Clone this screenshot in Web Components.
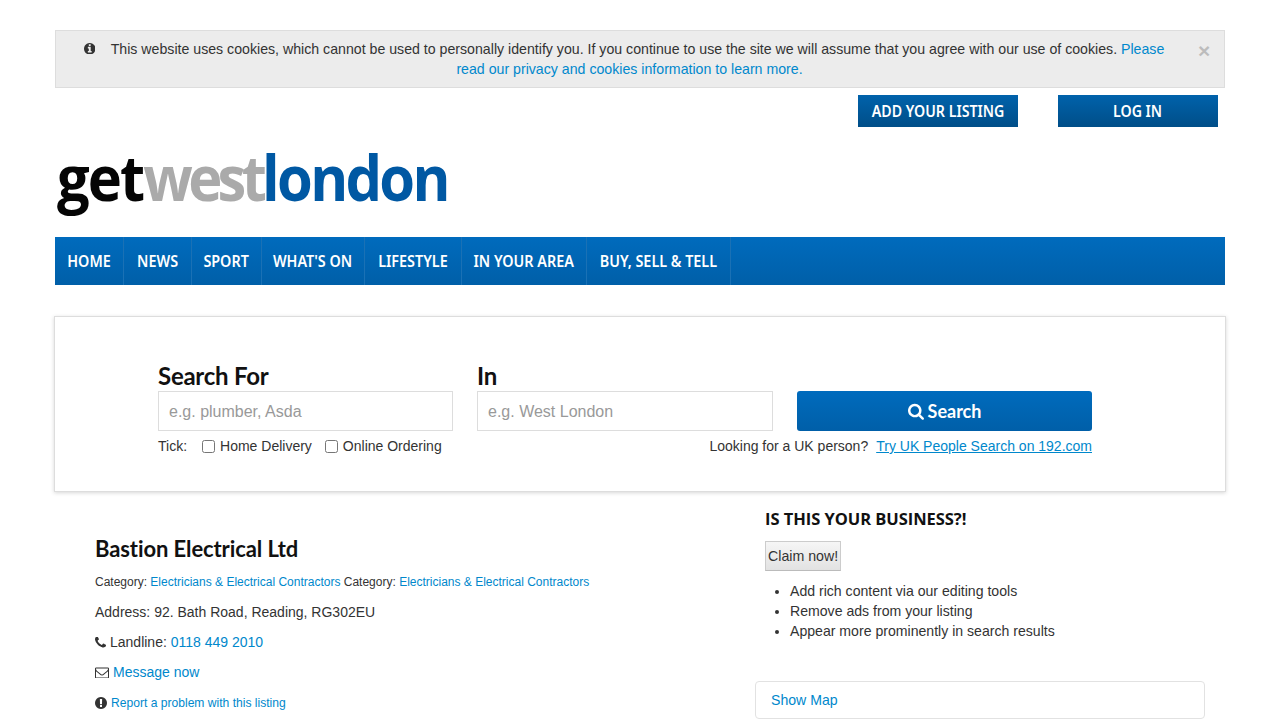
<!DOCTYPE html>
<html lang="en"><head><meta charset="utf-8"><title>Bastion Electrical Ltd</title>
<style>
html,body{margin:0;padding:0;background:#fff;overflow:hidden;height:720px}
body{font:14px/20px "Liberation Sans",Arial,sans-serif;color:#333}
</style></head><body>
<gwl-page></gwl-page>
<script>
const ICONS={
info:['128 128 1536 1536','M1152 1376v-160q0-14-9-23t-23-9h-96v-512q0-14-9-23t-23-9h-320q-14 0-23 9t-9 23v160q0 14 9 23t23 9h96v320h-96q-14 0-23 9t-9 23v160q0 14 9 23t23 9h448q14 0 23-9t9-23zm-128-896v-160q0-14-9-23t-23-9h-192q-14 0-23 9t-9 23v160q0 14 9 23t23 9h192q14 0 23-9t9-23zm640 416q0 209-103 385.5t-279.5 279.5-385.5 103-385.5-103-279.5-279.5-103-385.5 103-385.5 279.5-279.5 385.5-103 385.5 103 279.5 279.5 103 385.5z'],
warn:['128 128 1536 1536','M896 128q209 0 385.5 103t279.5 279.5 103 385.5-103 385.5-279.5 279.5-385.5 103-385.5-103-279.5-279.5-103-385.5 103-385.5 279.5-279.5 385.5-103zm128 1247v-190q0-14-9-23.5t-22-9.5h-192q-13 0-23 10t-10 23v190q0 13 10 23t23 10h192q13 0 22-9.5t9-23.5zm-2-344l18-621q0-12-10-18-10-8-24-8h-220q-14 0-24 8-10 6-10 18l17 621q0 10 10 17.5t24 7.5h185q14 0 23.5-7.5t10.5-17.5z'],
phone:['192 192 1408 1408','M1600 1240q0 27-10 70.5t-21 68.5q-21 50-122 106-94 51-186 51-27 0-53-3.5t-57.5-12.5-47-14.5-55.5-20.5-49-18q-98-35-175-83-127-79-264-216t-216-264q-48-77-83-175-3-9-18-49t-20.5-55.5-14.5-47-12.5-57.5-3.5-53q0-92 51-186 56-101 106-122 25-11 68.5-21t70.5-10q14 0 21 3 18 6 53 76 11 19 30 54t35 63.5 31 53.5q3 4 17.5 25t21.5 35.5 7 28.5q0 20-28.5 50t-62 55-62 53-28.5 46q0 9 5 22.5t8.5 20.5 14 24 11.5 19q76 137 174 235t235 174q2 1 19 11.5t24 14 20.5 8.5 22.5 5q18 0 46-28.5t53-62 55-62 50-28.5q14 0 28.5 7t35.5 21.5 25 17.5q25 15 53.5 31t63.5 35 54 30q70 35 76 53 3 7 3 21z'],
mail:['0 256 1792 1280','M1664 1504v-768q-32 36-69 66-268 206-426 338-51 43-83 67t-86.5 48.5-102.5 24.5h-2q-48 0-102.5-24.5t-86.5-48.5-83-67q-158-132-426-338-37-30-69-66v768q0 13 9.5 22.5t22.5 9.5h1472q13 0 22.5-9.5t9.5-22.5zm0-1051v-24.5l-.5-13-3-12.5-5.5-9-9-7.5-14-2.5h-1472q-13 0-22.5 9.5t-9.5 22.5q0 168 147 284 193 152 401 317 6 5 35 29.5t46 37.5 44.5 31.5 50.5 27.5 43 9h2q20 0 43-9t50.5-27.5 44.5-31.5 46-37.5 35-29.5q208-165 401-317 54-43 100.5-115.5t46.5-131.5zm128-37v1088q0 66-47 113t-113 47h-1472q-66 0-113-47t-47-113v-1088q0-66 47-113t113-47h1472q66 0 113 47t47 113z'],
search:['64 64 1664 1728','M1216 832q0-185-131.5-316.5t-316.5-131.5-316.5 131.5-131.5 316.5 131.5 316.5 316.5 131.5 316.5-131.5 131.5-316.5zm512 832q0 52-38 90t-90 38q-54 0-90-38l-343-342q-179 124-399 124-143 0-273.5-55.5t-225-150-150-225-55.5-273.5 55.5-273.5 150-225 225-150 273.5-55.5 273.5 55.5 225 150 150 225 55.5 273.5q0 220-124 399l343 343q37 37 37 90z']};
function def(name,html,setup){customElements.define(name,class extends HTMLElement{constructor(){super();this.attachShadow({mode:'open'}).innerHTML=html;}connectedCallback(){setup&&setup(this)}})}
def('gwl-icon','<style>:host{display:inline-block;line-height:0}svg{display:block;width:100%;height:100%;fill:currentColor}</style><svg><path/></svg>',el=>{const i=ICONS[el.getAttribute('name')];const s=el.shadowRoot.querySelector('svg');s.setAttribute('viewBox',i[0]);s.firstChild.setAttribute('d',i[1]);});
const HEAD='Lato,"Open Sans",sans-serif';
const CAPS='"Noto Sans","Open Sans",sans-serif';
def('gwl-cookie',`<style>
:host{display:flex;box-sizing:border-box;width:1170px;height:58px;border:1px solid #ddd;background:#ececec;margin-top:30px;padding:8px 15px 0 5px;font-size:14.16px}
.m{flex:1;text-align:center}.l1{padding-right:11px}
gwl-icon{width:11.5px;height:11.5px;color:#333;margin-right:15.5px}
a{color:#0088cc;text-decoration:none}
.x{font:700 21px/21px "Liberation Sans",Arial,sans-serif;color:#000;opacity:.2;margin:1px 0 0 0;width:11px;text-align:center}
</style><div class="m"><div class="l1"><gwl-icon name="info"></gwl-icon>This website uses cookies, which cannot be used to personally identify you. If you continue to use the site we will assume that you agree with our use of cookies. <a href="#">Please</a></div><div><a href="#">read our privacy and cookies information to learn more.</a></div></div><div class="x">×</div>`);
def('gwl-topbtn',`<style>:host{display:flex;align-items:center;justify-content:center;width:160px;height:32px;background:linear-gradient(#0062ab,#004e88);color:#fff;font:600 16.5px/32px ${CAPS};text-transform:uppercase;white-space:nowrap}
span{display:inline-block;transform:scaleX(.86)}</style><span><slot></slot></span>`);
def('gwl-actions',`<style>:host{display:flex;justify-content:flex-end;gap:40px;width:1170px;box-sizing:border-box;padding:7px 7px 0 0}</style><slot></slot>`);
def('gwl-logo',`<style>:host{display:block;height:110px;box-sizing:border-box;padding:10px 0 0 2px;overflow:hidden}
div{font:700 63px/80px "Open Sans",sans-serif;white-space:nowrap;transform:scaleX(.918);transform-origin:0 0}
.a{color:#050505;letter-spacing:-2.05px}.b{color:#aaa;letter-spacing:-5.1px}.c{color:#0058a3;letter-spacing:-2.95px}</style><div><span class="a">get</span><span class="b">west</span><span class="c">london</span></div>`);
def('gwl-nav',`<style>:host{display:flex;height:48px;background:linear-gradient(#006bbd,#005fa8)}</style><slot></slot>`);
def('gwl-navitem',`<style>:host{display:block;box-sizing:border-box;text-align:center;border-right:1px solid #1a71b5;color:#fff;font:600 16.5px/47px ${CAPS};text-transform:uppercase;white-space:nowrap;overflow:hidden}
span{display:inline-block;transform:scaleX(.87)}</style><span><slot></slot></span>`);
def('gwl-search',`<style>
:host{display:block;box-sizing:border-box;width:1172px;height:176px;margin:31px 0 0 -1px;border:1px solid #ddd;box-shadow:0 1px 4px rgba(0,0,0,.16);padding:0 133px 0 103px}
.g{display:grid;grid-template-columns:295px 296px 295px;column-gap:24px;padding-top:45px}
label{font:700 24px/28px ${HEAD};letter-spacing:-.25px;color:#111;display:block;height:29px}
.i{box-sizing:border-box;height:40px;border:1px solid #ddd;padding:0 10px;font:16px/40px "Liberation Sans",Arial,sans-serif;color:#999}
.b{margin-top:29px;height:40px;border-radius:3px;background:linear-gradient(#006bbd,#005fa8);color:#fff;display:flex;align-items:center;justify-content:center;gap:4px;font:700 18px/40px ${HEAD}}
.b gwl-icon{width:16px;height:17px}
.t{display:flex;align-items:center;height:20px;margin-top:5px;color:#333}
.t i{display:inline-block;box-sizing:border-box;width:13px;height:13px;border:1px solid #767676;border-radius:2.5px;background:#fff;margin:0 5px 0 13px}
.t span:first-child+i{margin-left:15px}
.t .f{margin-left:auto}.t a{color:#0088cc;margin-left:8px}
</style><div class="g"><div><label>Search For</label><div class="i">e.g. plumber, Asda</div></div><div><label>In</label><div class="i">e.g. West London</div></div><div class="b"><gwl-icon name="search"></gwl-icon>Search</div></div>
<div class="t"><span>Tick:</span><i></i><span>Home Delivery</span><i></i><span>Online Ordering</span><span class="f">Looking for a UK person?</span><a href="#">Try UK People Search on 192.com</a></div>`);
def('gwl-listing',`<style>
:host{display:block;width:660px;padding:0 0 0 40px;color:#333}
h1{font:700 22px/28px ${HEAD};letter-spacing:-.1px;color:#111;margin:0;padding-top:43px}
p{margin:0;height:30px;line-height:30px;white-space:nowrap;display:flex;align-items:center}
a{color:#0088cc;text-decoration:none}
.s{font-size:12px;height:20px;line-height:20px;margin-top:9px;white-space:nowrap}
.addr{margin-top:5px}
gwl-icon{margin-right:4px}
.r{font-size:12.1px;position:relative;top:1px}
</style><h1>Bastion Electrical Ltd</h1><div class="s">Category: <a href="#">Electricians &amp; Electrical Contractors</a> Category: <a href="#">Electricians &amp; Electrical Contractors</a></div>
<p class="addr">Address: 92. Bath Road, Reading, RG302EU</p>
<p><gwl-icon name="phone" style="width:11px;height:11px"></gwl-icon>Landline:&nbsp;<a href="#">0118 449 2010</a></p>
<p><gwl-icon name="mail" style="width:14px;height:11px"></gwl-icon><a href="#">Message now</a></p>
<p class="r"><gwl-icon name="warn" style="width:12px;height:12px"></gwl-icon><a href="#">Report a problem with this listing</a></p>`);
def('gwl-claim',`<style>
:host{display:block;width:450px;color:#333;font-size:14.1px}
.w{padding-left:10px}
h2{font:700 16.5px/20px "Open Sans",sans-serif;letter-spacing:-.05px;color:#111;margin:0;padding-top:17px;text-transform:uppercase}
.c{display:inline-block;box-sizing:border-box;height:30px;margin-top:12px;padding:0 2px;border:1px solid #ccc;background:linear-gradient(#f6f6f6,#e2e2e2);line-height:28px;border-bottom-color:#bbb;font-size:14.2px}
ul{margin:10px 0 0;padding:0 0 0 25px}li{line-height:20px}
.m{box-sizing:border-box;height:38px;margin-top:40px;border:1px solid #e2e2e2;border-radius:4px;padding:0 15px;line-height:36px;color:#0088cc}
</style><div class="w"><h2>Is this your business?!</h2><div class="c">Claim now!</div><ul><li>Add rich content via our editing tools</li><li>Remove ads from your listing</li><li>Appear more prominently in search results</li></ul></div><div class="m">Show Map</div>`);
def('gwl-page',`<style>
:host{display:block;width:1170px;margin-left:55px}
.c{display:flex;justify-content:space-between;padding-right:20px}
</style><gwl-cookie></gwl-cookie><gwl-actions><gwl-topbtn>Add your listing</gwl-topbtn><gwl-topbtn>Log in</gwl-topbtn></gwl-actions><gwl-logo></gwl-logo>
<gwl-nav><gwl-navitem style="width:69px">Home</gwl-navitem><gwl-navitem style="width:68px">News</gwl-navitem><gwl-navitem style="width:70px">Sport</gwl-navitem><gwl-navitem style="width:103px">What's on</gwl-navitem><gwl-navitem style="width:97px">Lifestyle</gwl-navitem><gwl-navitem style="width:125px">In your area</gwl-navitem><gwl-navitem style="width:144px">Buy, sell &amp; tell</gwl-navitem></gwl-nav>
<gwl-search></gwl-search><div class="c"><gwl-listing></gwl-listing><gwl-claim></gwl-claim></div>`);
</script></body></html>
